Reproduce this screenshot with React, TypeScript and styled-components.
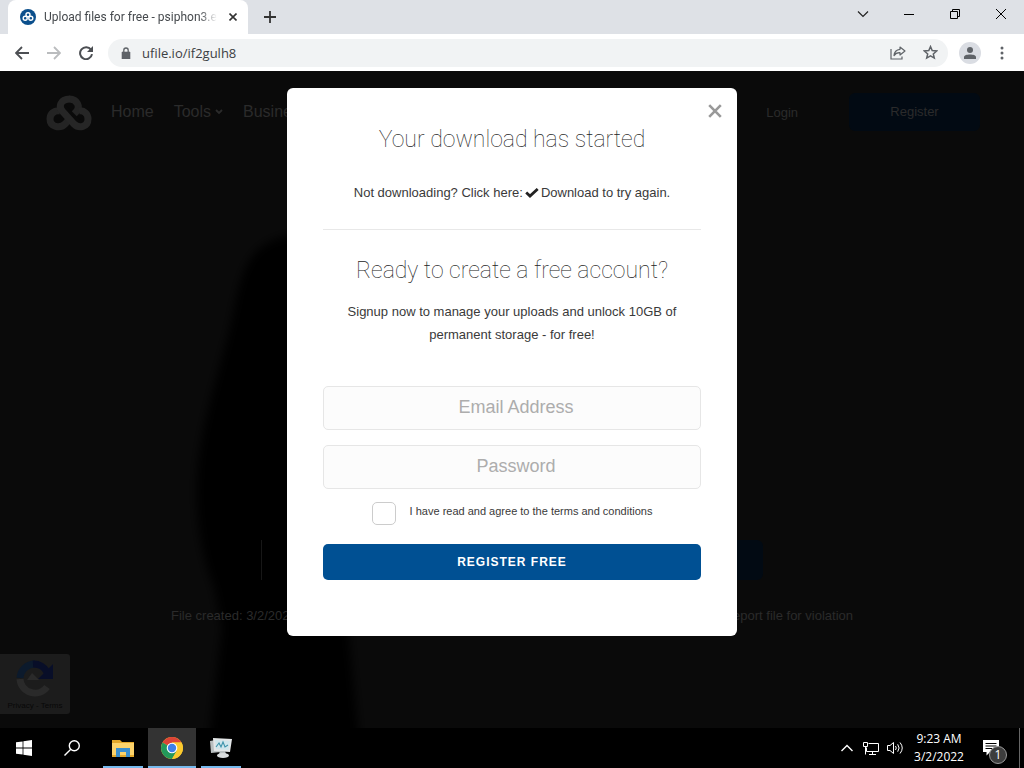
import React from "react";
import styled, { createGlobalStyle } from "styled-components";

const ui = '"Open Sans", "Noto Sans", sans-serif';
const arial = '"Liberation Sans", Arial, sans-serif';

const GlobalStyle = createGlobalStyle`
  * { box-sizing: border-box; }
  body { margin: 0; font-family: ${arial}; background: #000; }
  button { border: 0; padding: 0; background: none; color: inherit; font: inherit; cursor: pointer; }
  h2, p { margin: 0; font-weight: 400; }
  svg { display: block; flex: none; }
`;

const Desktop = styled.div`
  display: flex;
  flex-direction: column;
  min-height: 100vh;
`;

/* Browser chrome */

const TabStrip = styled.div`
  display: flex;
  align-items: stretch;
  height: 34px;
  padding-left: 8px;
  background: #dee1e6;
`;

const Tab = styled.div`
  display: flex;
  align-items: center;
  gap: 8px;
  width: 240px;
  padding: 0 8px 0 12px;
  border-radius: 8px 8px 0 0;
  background: #fff;
`;

const TabTitle = styled.span`
  flex: 1;
  white-space: nowrap;
  font: 12px/16px Roboto, sans-serif;
  color: #45494d;
  mask-image: linear-gradient(to right, #000 90%, transparent);
`;

const IconButton = styled.button<{ $w?: number; $color?: string }>`
  display: flex;
  flex: none;
  align-items: center;
  justify-content: center;
  width: ${(p) => p.$w ?? 32}px;
  color: ${(p) => p.$color ?? "#5f6368"};
`;

const WindowControls = styled.div`
  display: flex;
  margin-left: auto;
  padding-bottom: 6px;
`;

const Toolbar = styled.div`
  display: flex;
  align-items: center;
  height: 37px;
  padding: 0 6px;
  background: #fff;
`;

const AddressBar = styled.div`
  display: flex;
  flex: 1;
  align-items: center;
  height: 28px;
  margin: 0 6px;
  padding: 0 2px 0 12px;
  border-radius: 14px;
  background: #f1f3f4;
`;

const Url = styled.input`
  flex: 1;
  min-width: 0;
  margin-left: 10px;
  padding: 0;
  border: 0;
  outline: 0;
  background: none;
  font: 13px/18px ${ui};
  color: #3c4043;
`;

const Avatar = styled.span`
  display: flex;
  align-items: center;
  justify-content: center;
  width: 22px;
  height: 22px;
  border-radius: 50%;
  background: #dadde3;
`;

/* Page under the dimmed overlay */

const Page = styled.div`
  position: relative;
  display: flex;
  flex: 1;
  flex-direction: column;
  overflow: hidden;
  background: #0a0a0a;
  color: #2b2b2b;
`;

const Silhouette = styled.svg`
  position: absolute;
  left: 180px;
  bottom: 0;
`;

const SiteHeader = styled.header`
  position: relative;
  display: flex;
  align-items: center;
  padding: 22px 44px 0 46px;
`;

const SiteNav = styled.nav`
  display: flex;
  gap: 20px;
  margin-left: 19px;
`;

const NavLink = styled.a`
  display: flex;
  align-items: center;
  gap: 4px;
  font-size: 16px;
  line-height: 20px;
  color: inherit;
  text-decoration: none;
`;

const Account = styled.div`
  display: flex;
  align-items: center;
  gap: 51px;
  margin-left: auto;
  font-size: 13px;
`;

const RegisterLink = styled.a`
  width: 131px;
  border-radius: 6px;
  background: #020a13;
  line-height: 38px;
  text-align: center;
  color: inherit;
  text-decoration: none;
`;

const PlainLink = styled.a`
  color: inherit;
  text-decoration: none;
`;

const FileArea = styled.section`
  position: relative;
  display: flex;
  flex-direction: column;
  align-items: center;
  gap: 28px;
  margin-top: auto;
  padding-bottom: 30px;
`;

const DownloadRow = styled.div`
  display: flex;
  justify-content: flex-end;
  width: 502px;
  height: 40px;
  border-left: 1px solid #171717;
`;

const DownloadBlock = styled.div`
  width: 160px;
  border-radius: 6px;
  background: #020a13;
`;

const FileMeta = styled.div`
  display: flex;
  justify-content: space-between;
  width: 682px;
  font-size: 13px;
  line-height: 16px;
`;

const Recaptcha = styled.div`
  position: relative;
  display: flex;
  flex-direction: column;
  align-items: center;
  width: 70px;
  height: 60px;
  margin-bottom: 14px;
  padding-top: 4px;
  border-radius: 0 3px 3px 0;
  background: #1c1c1c;
  font-size: 8px;
  line-height: 12px;
  color: #080808;
`;

/* Sign-up dialog */

const Overlay = styled.div`
  position: absolute;
  inset: 0;
  display: flex;
  align-items: flex-start;
  justify-content: center;
  padding-top: 17px;
`;

const Dialog = styled.div`
  position: relative;
  display: flex;
  flex-direction: column;
  width: 450px;
  max-width: 100%;
  padding: 36px 36px 56px;
  border-radius: 6px;
  background: #fff;
  color: #3a3a3a;
  text-align: center;
`;

const CloseDialog = styled.button`
  position: absolute;
  top: 16px;
  right: 15px;
  color: #999;
`;

const Title = styled.h2`
  font: 100 23px/32px Roboto, sans-serif;
  color: #222;
`;

const Copy = styled.p`
  font-size: 13px;
  line-height: 23px;
`;

const Retry = styled(Copy)`
  display: flex;
  align-items: center;
  justify-content: center;
  gap: 2px;
  margin-top: 25px;
`;

const Pitch = styled(Copy)`
  margin-top: 13px;
`;

const Rule = styled.hr`
  width: 100%;
  margin: 25px 0;
  border: 0;
  border-top: 1px solid #e8e8e8;
`;

const SignupForm = styled.form`
  display: flex;
  flex-direction: column;
  margin-top: 40px;
`;

const Field = styled.input`
  width: 100%;
  height: 44px;
  margin-bottom: 15px;
  padding: 0 8px 2px 16px;
  border: 1px solid #e6e6e6;
  border-radius: 5px;
  background: #fcfcfc;
  font: 18px ${arial};
  text-align: center;
  color: #333;
  &::placeholder { color: #adadad; opacity: 1; }
`;

const Terms = styled.label`
  display: flex;
  justify-content: center;
  gap: 14px;
  margin: -2px 0 19px;
  font-size: 11px;
  line-height: 18px;
`;

const Tick = styled.input`
  appearance: none;
  width: 24px;
  height: 23px;
  margin: 0;
  border: 1px solid #ccc;
  border-radius: 5px;
  background: #fff;
`;

const Submit = styled.button`
  height: 36px;
  border-radius: 5px;
  background: #005093;
  font-weight: 700;
  font-size: 12px;
  letter-spacing: 1px;
  color: #fff;
`;

/* Windows taskbar */

const Taskbar = styled.footer`
  display: flex;
  align-items: stretch;
  height: 40px;
  background: #000;
  color: #fff;
`;

const TaskButton = styled.button<{ $w: number; $open?: boolean; $active?: boolean }>`
  display: flex;
  align-items: center;
  justify-content: center;
  width: ${(p) => p.$w}px;
  background: ${(p) => (p.$active ? "#333" : "transparent")};
  box-shadow: ${(p) => (p.$open ? "inset 0 -2px #76b9ed" : "none")};
`;

const Apps = styled.div`
  display: flex;
  gap: 5px;
  padding-left: 7px;
`;

const Tray = styled.div`
  display: flex;
  align-items: stretch;
  margin-left: auto;
`;

const Clock = styled.div`
  display: flex;
  flex-direction: column;
  align-items: center;
  justify-content: center;
  width: 64px;
  font: 12px/18px ${ui};
  white-space: nowrap;
`;

const Notices = styled(TaskButton)`
  position: relative;
  padding-right: 8px;
`;

const Badge = styled.span`
  position: absolute;
  left: 18px;
  top: 18px;
  width: 18px;
  height: 18px;
  border: 1px solid #999;
  border-radius: 50%;
  background: #3d3d3d;
  font: 12px/16px ${ui};
  text-align: center;
`;

const ShowDesktop = styled.button`
  width: 5px;
  border-left: 1px solid #666;
`;

/* Three looped strands; the left-hand strand passes under the long diagonal. */
function CloudMark() {
  return (
    <svg width="46" height="38" viewBox="0 0 46 38" fill="none" strokeWidth="7">
      <path d="M14 18C8 17 4 21 4 26C4 34 14 36 19 31L30 19C35 14 31 6 23.500 6" stroke="#242424" />
      <path d="M15 14L31 30" stroke="#0a0a0a" strokeWidth="9" />
      <path d="M24 6C14 6 12 14 17 19L28 31C33 36 42 34 42 26C42 21 38 17 33 18" stroke="#262626" />
    </svg>
  );
}

function BrowserChrome() {
  return (
    <>
      <TabStrip>
        <Tab>
          <svg width="16" height="16" viewBox="0 0 16 16">
            <circle cx="8" cy="8" r="8" fill="#0b4f8c" />
            <g fill="none" stroke="#fff" strokeWidth="1.4">
              <circle cx="8" cy="5.8" r="2" />
              <circle cx="5.2" cy="9.3" r="2" />
              <circle cx="10.8" cy="9.3" r="2" />
            </g>
          </svg>
          <TabTitle>Upload files for free - psiphon3.e</TabTitle>
          <IconButton $w={16} $color="#333" aria-label="Close tab">
            <svg width="8" height="8" viewBox="0 0 8 8" stroke="currentColor" strokeWidth="1.6">
              <path d="M0.5 0.5L7.5 7.5M7.5 0.5L0.5 7.5" />
            </svg>
          </IconButton>
        </Tab>
        <IconButton $w={44} $color="#333" aria-label="New tab">
          <svg width="12" height="12" viewBox="0 0 12 12" stroke="currentColor" strokeWidth="1.8">
            <path d="M6 0V12M0 6H12" />
          </svg>
        </IconButton>
        <WindowControls>
          <IconButton $w={46} $color="#222" aria-label="Search tabs">
            <svg width="12" height="12" viewBox="0 0 12 12" fill="none" stroke="currentColor" strokeWidth="1.2">
              <path d="M1 3.5L6 8.5L11 3.5" />
            </svg>
          </IconButton>
          <IconButton $w={46} $color="#000" aria-label="Minimize">
            <svg width="10" height="10" viewBox="0 0 10 10" stroke="currentColor">
              <path d="M0 5.5H10" />
            </svg>
          </IconButton>
          <IconButton $w={46} $color="#000" aria-label="Restore">
            <svg width="10" height="10" viewBox="0 0 10 10" fill="none" stroke="currentColor">
              <path d="M0.5 2.5H7.5V9.5H0.5ZM2.5 2.5V0.5H9.5V7.5H7.5" />
            </svg>
          </IconButton>
          <IconButton $w={46} $color="#000" aria-label="Close">
            <svg width="10" height="10" viewBox="0 0 10 10" stroke="currentColor">
              <path d="M0 0L10 10M10 0L0 10" />
            </svg>
          </IconButton>
        </WindowControls>
      </TabStrip>
      <Toolbar>
        <IconButton aria-label="Back" $color="#4c4f53">
          <svg width="14" height="14" viewBox="0 0 14 14" fill="none" stroke="currentColor" strokeWidth="1.8">
            <path d="M14 7H1.5M7 1L1 7L7 13" />
          </svg>
        </IconButton>
        <IconButton aria-label="Forward" $color="#babcbe">
          <svg width="14" height="14" viewBox="0 0 14 14" fill="none" stroke="currentColor" strokeWidth="1.8">
            <path d="M0 7H12.5M7 1L13 7L7 13" />
          </svg>
        </IconButton>
        <IconButton aria-label="Reload" $color="#4c4f53">
          <svg width="14" height="14" viewBox="0 0 14 14" fill="none" stroke="currentColor" strokeWidth="2">
            <path d="M12 3.7A6 6 0 1 0 13 8.2" />
            <path d="M14 0V6H8Z" fill="currentColor" stroke="none" />
          </svg>
        </IconButton>
        <AddressBar>
          <svg width="12" height="12" viewBox="0 0 12 12">
            <path d="M2 5H10V12H2Z" fill="#5f6368" stroke="#5f6368" strokeLinejoin="round" strokeWidth="0.6" />
            <path d="M3.8 5V3.2A2.2 2.2 0 0 1 8.2 3.2V5" fill="none" stroke="#5f6368" strokeWidth="1.3" />
          </svg>
          <Url aria-label="Address" defaultValue="ufile.io/if2gulh8" />
          <IconButton aria-label="Share">
            <svg width="16" height="14" viewBox="0 0 16 14" fill="none" stroke="currentColor" strokeWidth="1.2">
              <path d="M1 3V13H12V10.5" />
              <path d="M10 1L15 5L10 9V6.7C7 6.6 5.2 7.6 4 9.6C4.3 6 6.3 3.7 10 3.3Z" strokeLinejoin="round" />
            </svg>
          </IconButton>
          <IconButton aria-label="Bookmark">
            <svg width="15" height="15" viewBox="0 0 15 15" fill="none" stroke="currentColor" strokeWidth="1.5">
              <path d="M7.5 1.6L9.2 5.6L13.6 6L10.3 8.9L11.3 13.1L7.5 10.9L3.7 13.1L4.7 8.9L1.4 6L5.8 5.6Z" />
            </svg>
          </IconButton>
        </AddressBar>
        <IconButton aria-label="Profile">
          <Avatar>
            <svg width="12" height="12" viewBox="0 0 12 12" fill="currentColor">
              <circle cx="6" cy="3" r="3" />
              <path d="M0 12V10C0 6.7 12 6.7 12 10V12Z" />
            </svg>
          </Avatar>
        </IconButton>
        <IconButton aria-label="Menu">
          <svg width="4" height="14" viewBox="0 0 4 14" fill="currentColor">
            <circle cx="2" cy="2" r="1.5" />
            <circle cx="2" cy="7" r="1.5" />
            <circle cx="2" cy="12" r="1.5" />
          </svg>
        </IconButton>
      </Toolbar>
    </>
  );
}

function SiteBackground() {
  return (
    <>
      <Silhouette width="220" height="500" viewBox="0 0 220 500" fill="#050505">
        <filter id="soft">
          <feGaussianBlur stdDeviation="5" />
        </filter>
        <path
          filter="url(#soft)"
          d="M130 5C75 8 65 30 55 75C45 130 20 190 17 250C15 290 22 330 34 360L42 400L28 520H180L168 400L150 300Z"
        />
      </Silhouette>
      <SiteHeader>
        <CloudMark />
        <SiteNav>
          <NavLink href="#home">Home</NavLink>
          <NavLink href="#tools">
            Tools
            <svg width="8" height="6" viewBox="0 0 8 6" fill="none" stroke="currentColor" strokeWidth="1.8">
              <path d="M1 1L4 4L7 1" />
            </svg>
          </NavLink>
          <NavLink href="#business">Business</NavLink>
        </SiteNav>
        <Account>
          <PlainLink href="#login">Login</PlainLink>
          <RegisterLink href="#register">Register</RegisterLink>
        </Account>
      </SiteHeader>
      <FileArea>
        <DownloadRow>
          <DownloadBlock />
        </DownloadRow>
        <FileMeta>
          <span>File created: 3/2/2022</span>
          <PlainLink href="#report">Report file for violation</PlainLink>
        </FileMeta>
      </FileArea>
      <Recaptcha>
        <svg width="40" height="42" viewBox="0 0 40 42" fill="none" strokeWidth="7">
          <path d="M5 20A15 15 0 0 1 20 6" stroke="#0c1a2c" />
          <path d="M18 6A15 15 0 0 1 32 14" stroke="#080e28" />
          <path d="M38 6V21H23Z" fill="#080e28" />
          <path d="M5 21A15 15 0 0 0 32 29" stroke="#2a2a2a" />
          <path d="M12 22H24L17 15Z" fill="#2a2a2a" />
        </svg>
        Privacy - Terms
      </Recaptcha>
    </>
  );
}

function SignupDialog() {
  return (
    <Overlay>
      <Dialog role="dialog" aria-label="Your download has started">
        <CloseDialog aria-label="Close dialog">
          <svg width="14" height="14" viewBox="0 0 14 14" stroke="currentColor" strokeWidth="2.6">
            <path d="M1.2 1.2L12.8 12.8M12.8 1.2L1.2 12.8" />
          </svg>
        </CloseDialog>
        <Title>Your download has started</Title>
        <Retry>
          <span>Not downloading? Click here:</span>
          <svg width="14" height="10" viewBox="0 0 14 10" fill="none" stroke="#222" strokeWidth="2.8">
            <path d="M1.2 4.5L5 8L12.7 1" />
          </svg>
          <span>Download to try again.</span>
        </Retry>
        <Rule />
        <Title>Ready to create a free account?</Title>
        <Pitch>Signup now to manage your uploads and unlock 10GB of permanent storage - for free!</Pitch>
        <SignupForm onSubmit={(e) => e.preventDefault()}>
          <Field type="email" placeholder="Email Address" aria-label="Email Address" />
          <Field type="password" placeholder="Password" aria-label="Password" />
          <Terms>
            <Tick type="checkbox" />
            I have read and agree to the terms and conditions
          </Terms>
          <Submit type="submit">REGISTER FREE</Submit>
        </SignupForm>
      </Dialog>
    </Overlay>
  );
}

function WindowsTaskbar() {
  return (
    <Taskbar>
      <TaskButton $w={48} aria-label="Start">
        <svg width="16" height="16" viewBox="0 0 16 16" fill="#fff">
          <path d="M0 2.3L6.6 1.4V7.6H0ZM7.4 1.3L16 0V7.6H7.4ZM0 8.4H6.6V14.6L0 13.7ZM7.4 8.4H16V16L7.4 14.7Z" />
        </svg>
      </TaskButton>
      <TaskButton $w={48} aria-label="Search">
        <svg width="16" height="16" viewBox="0 0 16 16" fill="none" stroke="#fff" strokeWidth="1.4">
          <circle cx="10.3" cy="5.7" r="5" />
          <path d="M6.8 9.3L0.5 15.5" />
        </svg>
      </TaskButton>
      <Apps>
        <TaskButton $w={40} $open aria-label="File Explorer">
          <svg width="22" height="20" viewBox="0 0 22 20">
            <path d="M0 2H8L10 4H22V19H0Z" fill="#e3a82b" />
            <path d="M0 5H22V17H0Z" fill="#fcd36b" />
            <path d="M4 10H18V19H14V14H8V19H4Z" fill="#3b8fce" />
          </svg>
        </TaskButton>
        <TaskButton $w={48} $open $active aria-label="Chrome">
          <svg width="22" height="22" viewBox="0 0 22 22">
            <circle cx="11" cy="11" r="11" fill="#fbc92e" />
            <path d="M11 11L1.5 5.5A11 11 0 0 1 20.5 5.5H11Z" fill="#dc4437" />
            <path d="M11 11L1.5 5.5A11 11 0 0 0 11 22L15.8 13.7Z" fill="#23995b" />
            <path d="M11 5.5H20.5A11 11 0 0 1 11 22L15.8 13.7Z" fill="#fbc92e" />
            <circle cx="11" cy="11" r="5.3" fill="#fff" />
            <circle cx="11" cy="11" r="4.2" fill="#3f80e8" />
          </svg>
        </TaskButton>
        <TaskButton $w={40} $open aria-label="System monitor">
          <svg width="24" height="22" viewBox="0 0 24 22">
            <path d="M1 4L12 2V15L2 16Z" fill="#b9bfc0" />
            <path d="M4 1L23 2L21 15L5 14Z" fill="#e3e6e7" />
            <path d="M6 3L21 4L19.5 13L7 12Z" fill="#cfe6ec" />
            <path d="M7 10L10 6L12 10L14 5L16 10L19 8" fill="none" stroke="#3c93ab" strokeWidth="1.1" />
            <path d="M11 14H16L17 17H10Z" fill="#b9bfc0" />
            <ellipse cx="14" cy="18.5" rx="6" ry="2.6" fill="#d9dcdd" />
          </svg>
        </TaskButton>
      </Apps>
      <Tray>
        <TaskButton $w={24} aria-label="Hidden icons">
          <svg width="12" height="8" viewBox="0 0 12 8" fill="none" stroke="#fff" strokeWidth="1.4">
            <path d="M0.5 7L6 1.5L11.5 7" />
          </svg>
        </TaskButton>
        <TaskButton $w={24} aria-label="Network">
          <svg width="16" height="15" viewBox="0 0 16 15" fill="none" stroke="#fff">
            <path d="M5.5 2.5H15.5V10.5H3.5V6.5M0.5 1.5H4.5V5.5H0.5ZM2.5 6V13.5M9.5 10.5V13.5M6 13.5H13" />
          </svg>
        </TaskButton>
        <TaskButton $w={24} aria-label="Volume">
          <svg width="17" height="14" viewBox="0 0 17 14" fill="none" stroke="#fff">
            <path d="M0.5 4.5H3L6.5 1.5V12.5L3 9.5H0.5Z" />
            <path d="M8.5 5Q10 7 8.5 9M10.7 3.3Q13.5 7 10.7 10.7M13 1.5Q17.5 7 13 12.5" />
          </svg>
        </TaskButton>
        <Clock>
          <span>9:23 AM</span>
          <span>3/2/2022</span>
        </Clock>
        <Notices $w={48} aria-label="Notifications">
          <svg width="16" height="16" viewBox="0 0 16 16">
            <path d="M0 0H16V12H7L3.5 15.5V12H0Z" fill="#fff" />
            <path d="M2.5 3.5H13.5M2.5 6H13.5M2.5 8.5H9" stroke="#000" />
          </svg>
          <Badge>1</Badge>
        </Notices>
        <ShowDesktop aria-label="Show desktop" />
      </Tray>
    </Taskbar>
  );
}

export default function App() {
  return (
    <Desktop>
      <GlobalStyle />
      <BrowserChrome />
      <Page>
        <SiteBackground />
        <SignupDialog />
      </Page>
      <WindowsTaskbar />
    </Desktop>
  );
}
